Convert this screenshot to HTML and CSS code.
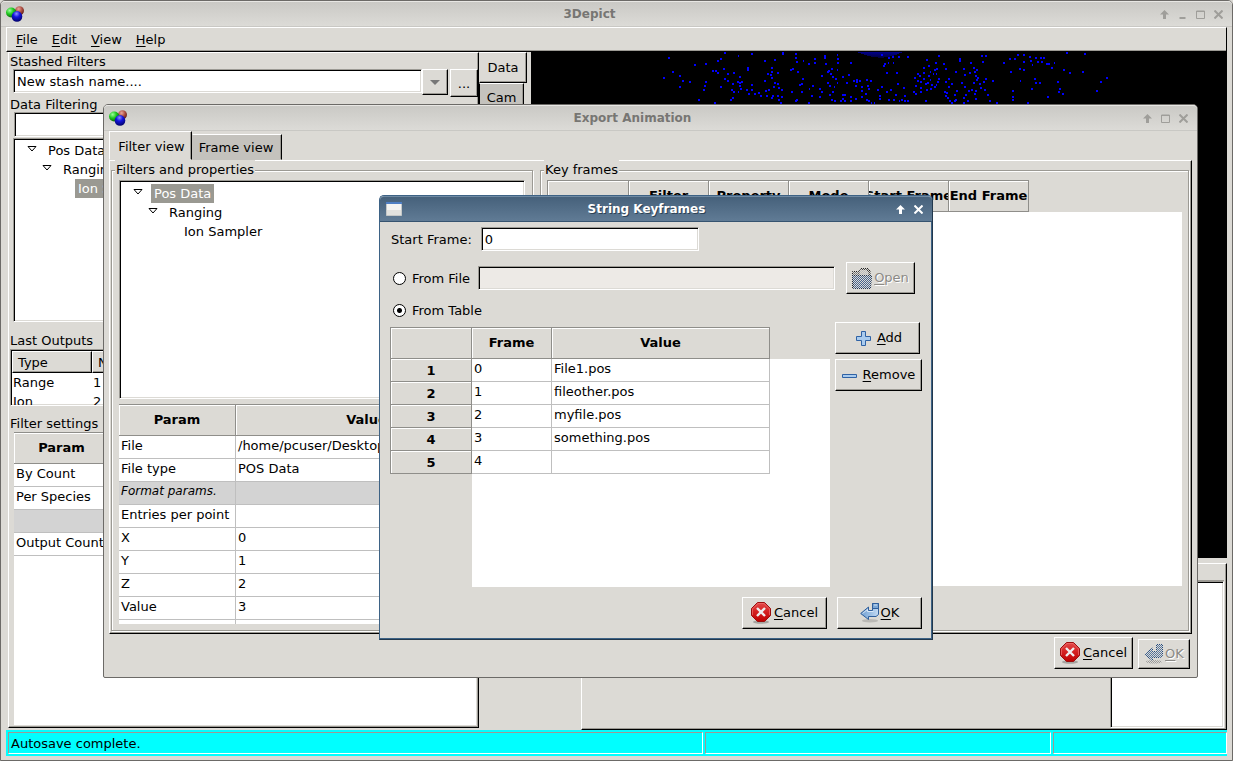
FILE: index.html
```html
<!DOCTYPE html>
<html lang="en">
<head>
<meta charset="utf-8">
<title>3Depict</title>
<link rel="stylesheet" href="styles.css">
</head>
<body>
<svg class="defs" width="0" height="0" aria-hidden="true">
  <defs>
    <radialGradient id="g-green" cx=".35" cy=".3" r=".8"><stop offset="0" stop-color="#9dff9d"/><stop offset=".45" stop-color="#1fc81f"/><stop offset="1" stop-color="#064b06"/></radialGradient>
    <radialGradient id="g-red" cx=".4" cy=".3" r=".8"><stop offset="0" stop-color="#eaa79c"/><stop offset=".5" stop-color="#a8493c"/><stop offset="1" stop-color="#4a120c"/></radialGradient>
    <radialGradient id="g-blue" cx=".45" cy=".25" r=".8"><stop offset="0" stop-color="#8f8fff"/><stop offset=".4" stop-color="#1414dd"/><stop offset="1" stop-color="#00005c"/></radialGradient>
    <linearGradient id="g-stop" x1="0" y1="0" x2="0" y2="1"><stop offset="0" stop-color="#e24a4a"/><stop offset=".5" stop-color="#d42020"/><stop offset="1" stop-color="#bd0000"/></linearGradient>
    <linearGradient id="g-arrow" x1="0" y1="0" x2="1" y2="0"><stop offset="0" stop-color="#6f9fd3"/><stop offset="1" stop-color="#c3daf2"/></linearGradient>
    <pattern id="stipple" width="2" height="2" patternUnits="userSpaceOnUse"><path shape-rendering="crispEdges" fill="#dcdad5" d="M0 0h1v1h-1zM1 1h1v1h-1z"/></pattern>
    <symbol id="i-app" viewBox="0 0 18 16">
      <circle cx="13.500" cy="4.800" r="4.500" fill="url(#g-red)"/>
      <ellipse cx="5.200" cy="6.500" rx="5.200" ry="5" fill="url(#g-green)"/>
      <circle cx="11" cy="10.400" r="5.300" fill="url(#g-blue)"/>
    </symbol>
    <symbol id="i-up" viewBox="0 0 9 9"><path fill="currentColor" d="M4.500 0 9 4.500H6V9H3V4.500H0z"/></symbol>
    <symbol id="i-min" viewBox="0 0 9 9"><path fill="currentColor" d="M1.500 7h6v2h-6z"/></symbol>
    <symbol id="i-max" viewBox="0 0 9 9"><path fill="none" stroke="currentColor" d="M.5 1h8v7.500h-8zM.5 1.500h8"/></symbol>
    <symbol id="i-close" viewBox="0 0 9 9"><path fill="none" stroke="currentColor" stroke-width="2" d="M.5.5l8 8m0-8l-8 8"/></symbol>
    <symbol id="i-cancel" viewBox="0 0 20 22">
      <ellipse cx="10" cy="20" rx="8" ry="1.800" fill="#000" opacity=".25"/>
      <path fill="url(#g-stop)" stroke="#9b0e0e" d="M6.500.5h7l6 6v7l-6 6h-7l-6-6v-7z"/>
      <path fill="none" stroke="#f07070" opacity=".7" d="M7 1.500h6l5.500 5.500v6M1.500 13V7L7 1.500"/>
      <path fill="none" stroke="#eee" stroke-width="2.400" d="M6 6l8 8m0-8l-8 8"/>
    </symbol>
    <symbol id="i-ok" viewBox="0 0 20 20">
      <ellipse cx="10" cy="17.800" rx="8" ry="1.700" fill="#000" opacity=".15"/>
      <path fill="url(#g-arrow)" stroke="#2f5f9c" stroke-linejoin="round" d="M12.500.5h6v11l-2.500 2H8.500v3L.7 10.500 8.500 4v3.500h4z"/>
      <path fill="#7ba7d6" stroke="#2f5f9c" d="M12.500.5h6v5h-6z"/>
      <path fill="none" stroke="#eaf3fc" opacity=".8" d="M14 2h3M2.500 10.500l5-4v2h6"/>
    </symbol>
    <symbol id="i-ok-off" viewBox="0 0 20 20">
      <ellipse cx="10" cy="17.800" rx="8" ry="1.700" fill="#999"/>
      <path fill="#58779f" stroke="#234a7d" d="M12.500.5h6v11l-2.500 2H8.500v3L.7 10.500 8.500 4v3.500h4z"/>
      <rect width="20" height="20" fill="url(#stipple)"/>
    </symbol>
    <symbol id="i-open-off" viewBox="0 0 20 21">
      <path fill="#777" stroke="#222" d="M.5 20V3.500h6l2-3h8l1.500 3V8"/>
      <path fill="#bbb" stroke="#444" d="M7 8V3.500l2-2h5.500L17 4v4"/>
      <path fill="#47648f" stroke="#1f3454" d="M.5 7.500h19l-1 13H1.500z"/>
      <rect width="20" height="21" fill="url(#stipple)"/>
    </symbol>
  </defs>
</svg>

<div class="window main">
  <header class="titlebar">
    <svg class="app-icon"><use href="#i-app"/></svg>
    <h1 class="title">3Depict</h1>
    <div class="window-buttons">
      <button aria-label="Shade"><svg><use href="#i-up"/></svg></button>
      <button aria-label="Minimize"><svg><use href="#i-min"/></svg></button>
      <button aria-label="Maximize"><svg><use href="#i-max"/></svg></button>
      <button aria-label="Close"><svg><use href="#i-close"/></svg></button>
    </div>
  </header>
  <nav class="menubar">
    <button><u>F</u>ile</button><button><u>E</u>dit</button><button><u>V</u>iew</button><button><u>H</u>elp</button>
  </nav>

  <div class="workspace">
    <section class="notebook">
      <div class="side-page">
        <label class="caption" for="stash">Stashed Filters</label>
        <div class="combo-row">
          <div class="combo">
            <input id="stash" class="field" value="New stash name....">
            <button class="bevel drop" aria-label="Show stashes"><svg viewBox="0 0 10 5"><path fill="#777" d="M0 0h10L5 5z"/></svg></button>
          </div>
          <button class="bevel more">...</button>
        </div>
        <label class="caption" for="filter">Data Filtering</label>
        <input id="filter" class="field filter-choice">
        <ul class="tree sunken side-tree">
          <li><svg class="twist" viewBox="0 0 10 6"><path d="M1 .5h8L5 5z"/></svg><span>Pos Data</span></li>
          <li class="level2"><svg class="twist" viewBox="0 0 10 6"><path d="M1 .5h8L5 5z"/></svg><span>Ranging</span></li>
          <li class="level3"><span class="selected">Ion Sampler</span></li>
        </ul>
        <h2 class="caption outputs-caption">Last Outputs</h2>
        <div class="sunken outputs">
          <table class="list">
            <thead><tr><th class="list-type">Type</th><th>Num</th></tr></thead>
            <tbody><tr><td>Range</td><td>1</td></tr><tr><td>Ion</td><td>2</td></tr></tbody>
          </table>
        </div>
        <h2 class="caption settings-caption">Filter settings</h2>
        <div class="grid-area side-grid">
          <table class="grid">
            <thead><tr><th class="side-param">Param</th><th></th></tr></thead>
            <tbody>
              <tr><td>By Count</td><td></td></tr>
              <tr><td>Per Species</td><td></td></tr>
              <tr class="group"><td></td><td></td></tr>
              <tr><td>Output Count</td><td></td></tr>
            </tbody>
          </table>
        </div>
      </div>
      <div class="side-tabs">
        <button class="side-tab active">Data</button>
        <button class="side-tab">Cam</button>
      </div>
    </section>

    <section class="views">
      <div class="scene">
        <svg class="cloud" viewBox="0 0 695 54" shape-rendering="crispEdges">
          <defs><linearGradient id="g-cap" x1="0" y1="0" x2="0" y2="1"><stop offset="0" stop-color="#00008c"/><stop offset="1" stop-color="#00003a"/></linearGradient></defs>
          <path fill="url(#g-cap)" d="M325 0h47l-10 4-12 2-13-2z"/>
          <g transform="translate(109 -12) scale(.378 .3333)" fill="none" stroke="#00f" stroke-width="6">
            <path d="M74 54h5M61 114h5M85 96h5M103 108h5M111 123h5M103 141h5M130 126h5M143 75h5M172 72h5M153 180h5M167 150h5M169 138h5M172 126h5M196 190h5M190 93h5M198 93h5M204 63h5M212 57h5M222 39h5M204 99h5M220 87h5M230 102h5M223 117h5M230 123h5M212 141h5M238 180h5M244 174h5M246 99h5M258 48h5M283 84h5M283 90h5M294 42h5M262 111h5M256 126h5M262 129h5M268 126h5M244 132h5M262 138h5M241 150h5M246 156h5M258 156h5M265 147h5M281 150h5M294 150h5M286 162h5M302 162h5M294 135h5M312 159h5M318 168h5M328 63h5M354 60h5M375 42h5M375 39h5M346 84h5M346 96h5M336 102h5M344 105h5M346 114h5M328 123h5M362 99h5M354 129h5M362 132h5M352 141h5M366 144h5M330 153h5M338 150h5M372 151h5M333 168h5M346 174h5M349 168h5M362 168h5M372 171h5M365 180h5M370 190h5M410 42h5M410 54h5M412 66h5M398 90h5M402 87h5M400 156h5M415 96h5M430 63h5M444 72h5M428 117h5M420 135h5M425 132h5M425 156h5M412 180h5M410 183h5M444 190h5M446 147h5M452 168h5M456 138h5M460 57h5M460 69h5M478 108h5M474 147h5M478 156h5M474 171h5M488 48h5M488 54h5M490 72h5M494 96h5M498 93h5M506 87h5M502 102h5M520 90h5M508 111h5M516 117h5M520 129h5M494 129h5M500 138h5M512 141h5M508 156h5M500 165h5M506 180h5M514 183h5M520 45h5M522 57h5M522 69h5M535 111h5M535 165h5M540 165h5M535 177h5M530 183h5M540 183h5M556 69h5M550 105h5M546 129h5M564 123h5M571 120h5M571 126h5M580 123h5M570 138h5M556 171h5M556 183h5M568 177h5M584 141h5M584 153h5M598 120h5M609 123h5M600 138h5M604 147h5M596 162h5M584 171h5M598 180h5M604 183h5M610 190h5M618 188h5M628 150h5M638 141h5M632 168h5M632 177h5M650 99h5M644 78h5M646 72h5M655 69h5M668 69h5M656 54h5M666 51h5M682 51h5M706 51h5M678 99h5M638 45h5M650 156h5M662 150h5M656 180h5M674 165h5M670 180h5M684 183h5M690 180h5M698 183h5M706 183h5M680 132h5M696 144h5M698 168h5M722 156h5M725 114h5M732 102h5M738 108h5M732 123h5M740 126h5M728 138h5M740 144h5M728 162h5M740 156h5M748 84h5M748 99h5M748 117h5M754 132h5M756 60h5M762 78h5M766 96h5M762 108h5M766 120h5M760 129h5M770 135h5M768 147h5M756 150h5M754 183h5M780 69h5M778 90h5M784 87h5M774 102h5M782 102h5M788 117h5M786 126h5M782 135h5M778 141h5M788 48h5M802 72h5M806 87h5M816 117h5M806 126h5M816 141h5M804 156h5M810 159h5M806 168h5M812 174h5M818 183h5M822 188h5M830 183h5M834 180h5M830 165h5M836 153h5M822 132h5M834 96h5M844 57h5M844 63h5M854 87h5M858 105h5M850 129h5M858 141h5M868 153h5M860 165h5M854 174h5M866 183h5M854 190h5M870 99h5M874 69h5M882 84h5M888 90h5M884 96h5M886 108h5M892 114h5M888 120h5M880 129h5M896 132h5M876 150h5M886 153h5M884 162h5M886 177h5M902 48h5M912 48h5M906 66h5M912 117h5M908 126h5M900 144h5M910 150h5M924 183h5M918 165h5M932 123h5M942 188h5M960 69h5M976 57h5M990 57h5M998 45h5M980 96h5M1002 87h5M1014 66h5M1014 45h5M1014 90h5M1004 123h5M984 153h5M984 171h5M984 180h5M1024 188h5M1030 51h5M1032 63h5M1036 75h5M1046 54h5M1050 66h5M1058 54h5M1066 54h5M1062 66h5M1074 72h5M1080 72h5M1088 84h5M1094 69h5M1042 117h5M1046 129h5M1056 129h5M1034 147h5M1078 171h5M1104 126h5M1108 147h5M1106 156h5M1116 162h5M1126 39h5M1120 90h5M1136 99h5M1169 96h5M1174 42h5M1206 153h5M1216 126h5M1232 114h5"/>
          </g>
        </svg>
      </div>
      <div class="plots"><div class="plot-page"></div><div class="plot-list"><div class="plot-list-head"></div><div class="sunken plot-list-body"></div></div></div>
    </section>
  </div>

  <footer class="statusbar"><span class="status first">Autosave complete.</span><span class="status"></span><span class="status last"></span></footer>
</div>

<div class="window export" role="dialog" aria-label="Export Animation">
  <header class="titlebar">
    <svg class="app-icon"><use href="#i-app"/></svg>
    <h1 class="title">Export Animation</h1>
    <div class="window-buttons">
      <button aria-label="Shade"><svg><use href="#i-up"/></svg></button>
      <button aria-label="Maximize"><svg><use href="#i-max"/></svg></button>
      <button aria-label="Close"><svg><use href="#i-close"/></svg></button>
    </div>
  </header>
  <div class="tabs"><button class="tab active">Filter view</button><button class="tab">Frame view</button></div>
  <div class="export-page">
    <fieldset class="frame filters-frame">
      <legend>Filters and properties</legend>
      <ul class="tree sunken export-tree">
        <li><svg class="twist" viewBox="0 0 10 6"><path d="M1 .5h8L5 5z"/></svg><span class="selected">Pos Data</span></li>
        <li class="level2"><svg class="twist" viewBox="0 0 10 6"><path d="M1 .5h8L5 5z"/></svg><span>Ranging</span></li>
        <li class="level3"><span>Ion Sampler</span></li>
      </ul>
      <div class="grid-area params">
        <table class="grid">
          <thead><tr><th class="param-name">Param</th><th class="param-value">Value</th></tr></thead>
          <tbody>
            <tr><td>File</td><td>/home/pcuser/Desktop</td></tr>
            <tr><td>File type</td><td>POS Data</td></tr>
            <tr class="group"><td><i>Format params.</i></td><td></td></tr>
            <tr><td>Entries per point</td><td></td></tr>
            <tr><td>X</td><td>0</td></tr>
            <tr><td>Y</td><td>1</td></tr>
            <tr><td>Z</td><td>2</td></tr>
            <tr><td>Value</td><td>3</td></tr>
            <tr><td></td><td></td></tr>
          </tbody>
        </table>
      </div>
    </fieldset>
    <fieldset class="frame keys-frame">
      <legend>Key frames</legend>
      <div class="grid-area keys">
        <table class="grid keys-table">
          <thead><tr><th></th><th>Filter</th><th>Property</th><th>Mode</th><th><span class="clip">Start Frame</span></th><th>End Frame</th></tr></thead>
        </table>
      </div>
    </fieldset>
  </div>
  <div class="export-actions">
    <button class="bevel action"><svg class="icon-cancel"><use href="#i-cancel"/></svg><span><u>C</u>ancel</span></button>
    <button class="bevel action ok-off" disabled><svg class="icon-ok"><use href="#i-ok-off"/></svg><span><u>O</u>K</span></button>
  </div>
</div>

<div class="window keyframes" role="dialog" aria-label="String Keyframes">
  <header class="titlebar">
    <svg class="doc-icon" viewBox="0 0 16 14"><path fill="#f4f4f2" stroke="#c5c8c8" d="M.5.5h15v13H.5z"/><path fill="#e2e2df" d="M1 8h14v5H1z"/><path fill="#4f7fc4" d="M0 0h16v2H0z"/></svg>
    <h1 class="title">String Keyframes</h1>
    <div class="window-buttons">
      <button aria-label="Shade"><svg><use href="#i-up"/></svg></button>
      <button aria-label="Close"><svg><use href="#i-close"/></svg></button>
    </div>
  </header>
  <form class="key-form">
    <div class="form-row start-row"><label for="start">Start Frame:</label><input id="start" class="field start-input" value="0"></div>
    <div class="form-row file-row">
      <label class="radio"><input type="radio" name="source">From File</label>
      <input class="field file-input" aria-label="File name" disabled>
      <button type="button" class="bevel action open" disabled><svg class="icon-open"><use href="#i-open-off"/></svg><span><u>O</u>pen</span></button>
    </div>
    <div class="form-row table-row"><label class="radio"><input type="radio" name="source" checked>From Table</label></div>
    <div class="table-area">
      <div class="grid-area values">
        <table class="grid values-table">
          <thead><tr><th class="row-head"></th><th class="col-frame">Frame</th><th class="col-value">Value</th></tr></thead>
          <tbody>
            <tr><th>1</th><td>0</td><td>File1.pos</td></tr>
            <tr><th>2</th><td>1</td><td>fileother.pos</td></tr>
            <tr><th>3</th><td>2</td><td>myfile.pos</td></tr>
            <tr><th>4</th><td>3</td><td>something.pos</td></tr>
            <tr><th>5</th><td>4</td><td></td></tr>
          </tbody>
        </table>
      </div>
      <div class="table-buttons">
        <button type="button" class="bevel action add"><svg class="icon-sign" viewBox="0 0 15 15"><path fill="#a9cbee" stroke="#2f62a5" d="M5.500.5h4V5.500h5v4h-5v5h-4V9.500h-5v-4h5z"/></svg><span><u>A</u>dd</span></button>
        <button type="button" class="bevel action remove"><svg class="icon-sign" viewBox="0 0 15 15"><path fill="#a9cbee" stroke="#2f62a5" d="M.5 6.500h14v3H.5z"/></svg><span><u>R</u>emove</span></button>
      </div>
    </div>
    <div class="key-actions">
      <button type="button" class="bevel action wide"><svg class="icon-cancel"><use href="#i-cancel"/></svg><span><u>C</u>ancel</span></button>
      <button type="button" class="bevel action wide"><svg class="icon-ok"><use href="#i-ok"/></svg><span><u>O</u>K</span></button>
    </div>
  </form>
</div>
</body>
</html>
```
FILE: styles.css
```css
* { box-sizing: border-box; }
body {
  margin: 0;
  height: 100vh;
  overflow: hidden;
  position: relative;
  background: #dcdad5;
  color: #000;
  font: 13px/19px "DejaVu Sans", sans-serif;
}
h1, h2, ul, fieldset { margin: 0; padding: 0; border: 0; font: inherit; }
ul { list-style: none; }
button, input { font: inherit; color: inherit; margin: 0; border-radius: 0; }
button { background: none; border: 0; padding: 0; white-space: nowrap; }
u { text-underline-offset: 2px; }
.defs { position: absolute; }

/* windows */
.window { display: flex; flex-direction: column; background: #dcdad5; border: 1px solid #6c6a67; }
.main { height: 100%; padding: 0 5px 4px; border-radius: 5px 5px 0 0; }
.export { position: absolute; left: 103px; right: 35px; top: 104px; bottom: 83px; padding: 0 5px 8px; border-radius: 5px 5px 2px 2px; }
.keyframes { position: absolute; left: 379px; top: 195px; width: 554px; height: 445px; border-color: #3d6285 #22384d #22384d #3d6285; box-shadow: inset -1px -1px #3d6285; border-radius: 5px 5px 0 0; }

.titlebar {
  display: flex;
  align-items: center;
  flex: none;
  height: 26px;
  padding: 0 4px 0 5px;
  margin: 0 -5px;
  border-radius: 4px 4px 0 0;
  border-top: 1px solid #e8e7e4;
  border-bottom: 1px solid #c9c8c4;
  background: linear-gradient(#cac9c5, #dcdbd7);
  color: #777673;
}
.main .titlebar { padding-right: 9px; }
.title { flex: 1; padding-right: 5px; text-align: center; font-size: 12px; font-weight: bold; }
.app-icon { width: 18px; height: 16px; }
.window-buttons { display: flex; gap: 9px; color: #9f9e9a; }
.window-buttons button { display: flex; }
.window-buttons svg { width: 9px; height: 9px; }
.export .window-buttons { padding-right: 5px; }
.keyframes .titlebar {
  margin: 0;
  padding: 0 9px 0 6px;
  background: linear-gradient(#46617b, #607b95);
  border-color: #6f8aa3 #46617b #36536f;
  color: #fff;
  text-shadow: 1px 1px #2d4256;
}
.keyframes .window-buttons { color: #fff; }
.doc-icon { width: 16px; height: 14px; }

/* shared controls */
.bevel { border: 1px solid; border-color: #fff #000 #000 #fff; box-shadow: inset -1px -1px #9c9a94; background: #dcdad5; }
.field, .sunken { border: 1px solid; border-color: #9c9a94 #fff #fff #9c9a94; box-shadow: inset 1px 1px #000, inset -1px -1px #dcdad5; background: #fff; }
.field { height: 24px; padding: 0 3px; min-width: 0; outline: 0; }
.field:disabled { background: #edeae6; }
.action { display: flex; align-items: center; justify-content: center; gap: 3px; height: 32px; flex: none; }
.action span { padding-bottom: 2px; }
.action:disabled { color: #8c8a86; text-shadow: 1px 1px #fff; }
.icon-cancel { width: 20px; height: 22px; }
.icon-ok { width: 20px; height: 20px; }
.icon-open { width: 20px; height: 21px; }
.icon-sign { width: 15px; height: 15px; }

.tree li { display: flex; align-items: center; height: 19px; padding-left: 13px; gap: 8px; }
.tree .level2 { padding-left: 28px; }
.tree .level3 { padding-left: 61px; }
.tree span { padding: 0 3px; }
.tree .selected { background: #9a9992; color: #fff; }
.twist { width: 10px; height: 6px; margin-bottom: 4px; fill: none; stroke: #000; }

.grid-area { overflow: hidden; background: #fff; }
.grid { border-collapse: separate; border-spacing: 0; table-layout: fixed; background: #dcdad5; }
.grid th { height: 23px; padding: 0; background: #dcdad5; border: solid #8f8e8a; border-width: 0 1px 1px 0; box-shadow: inset 1px 1px #fff; text-align: center; overflow: hidden; white-space: nowrap; }
.grid thead th { height: 32px; border-top-width: 1px; padding-bottom: 2px; }
.grid td { height: 23px; padding: 0 2px; background: #fff; border: solid #bfbfbf; border-width: 0 1px 1px 0; line-height: 20px; vertical-align: top; white-space: nowrap; overflow: hidden; }
.grid .group td { background: #d3d3d3; font-size: 12px; line-height: 18px; }

/* main window */
.menubar { display: flex; flex: none; gap: 14px; height: 25px; padding: 0 9px; border: 1px solid; border-color: #fff #000 #000 #fff; box-shadow: inset 0 -1px #9c9a94; }
.workspace { flex: 1; min-height: 0; display: grid; grid-template-columns: minmax(0, 525px) minmax(0, 1fr); }
.notebook { display: flex; padding: 0 4px 2px 2px; }
.side-page { flex: 1; display: flex; flex-direction: column; min-width: 0; padding-left: 1px; border: 1px solid; border-color: #fff #000 #000 #fff; box-shadow: inset -1px -1px #9c9a94; }
.caption { display: block; line-height: 17px; }
.combo-row { display: flex; gap: 2px; padding-left: 3px; height: 26px; margin-bottom: 1px; margin-top: -1px; align-items: flex-start; }
.combo { display: flex; flex: 1; }
.combo .field { flex: 1; }
.drop { width: 26px; height: 26px; display: flex; align-items: center; justify-content: center; }
.drop svg { width: 10px; height: 5px; }
.more { width: 28px; height: 28px; }
.filter-choice { margin-left: 4px; height: 25px; margin-top: -1px; }
.side-tree { height: 184px; margin: 1px 2px 0 3px; padding-top: 2px; }
.outputs-caption { margin-top: 10px; }
.outputs { height: 57px; overflow: hidden; padding: 1px; margin-right: 3px; }
.list { width: 100%; table-layout: fixed; border-collapse: separate; border-spacing: 0; }
.list th { height: 22px; padding: 0 5px; text-align: left; font-weight: normal; background: #dcdad5; border: 1px solid; border-color: #fff #000 #000 #fff; box-shadow: inset -1px -1px #9c9a94; }
.list-type { width: 80px; }
.list td { padding: 0 1px; height: 19px; line-height: 18px; }
.settings-caption { margin-top: 9px; }
.side-grid { flex: 1; margin: 0 2px 2px 4px; }
.side-grid .grid { width: 100%; }
.side-param { width: 96px; }
.side-tabs { width: 48px; }
.side-tab { display: block; height: 31px; width: 48px; border: 1px solid; border-color: #fff #000 #000 #dcdad5; box-shadow: inset -1px -1px #9c9a94; }
.side-tab + .side-tab { width: 45px; height: 28px; background: #c4c2bd; border-left-color: #000; }

.views { display: flex; flex-direction: column; min-width: 0; }
.scene { flex: 1; background: #000; overflow: hidden; }
.cloud { display: block; width: 695px; height: 54px; }
.plots { height: 167px; margin: 5px 0 0 50px; display: flex; border: 1px solid; border-color: #fff #000 #000 #fff; box-shadow: inset -1px -1px #9c9a94; }
.plot-page { flex: 1; }
.plot-list { width: 116px; display: flex; flex-direction: column; padding: 0 2px 1px 0; }
.plot-list-head { height: 17px; border-bottom: 1px solid #9c9a94; }
.plot-list-body { flex: 1; }

.statusbar { flex: none; height: 26px; display: grid; grid-template-columns: 695fr 346fr 174fr; gap: 2px; padding: 2px 0 2px 2px; background: #0ff; }
.status { border: 1px solid; border-color: #9c9a94 #fff #fff #9c9a94; padding: 1px 2px 0; line-height: 19px; }

/* export animation */
.tabs { flex: none; display: flex; align-items: flex-end; height: 29px; }
.tab { height: 26px; width: 90px; padding-right: 2px; background: #c4c2bd; border: 1px solid; border-color: #fff #000 #c4c2bd #c4c2bd; box-shadow: inset -1px 0 #9c9a94; }
.tab.active { height: 29px; width: 83px; padding: 2px 0 0 2px; background: #dcdad5; border-color: #fff #000 #dcdad5 #fff; }
.export-page { flex: 1; min-height: 0; display: grid; grid-template: minmax(0, 1fr) / 422px minmax(0, 1fr); gap: 7px; padding: 0 2px 2px 1px; border: 1px solid; border-color: #fff #000 #000 #fff; box-shadow: inset -1px -1px #9c9a94; }
.frame { min-width: 0; min-height: 0; display: flex; flex-direction: column; position: relative; border: 1px solid #9c9a94; box-shadow: inset 1px 1px #fff, 1px 1px #fff; margin-top: 9px; padding: 9px 7px 6px; }
.frame legend { position: absolute; top: -11px; left: 3px; padding: 0 1px; background: #dcdad5; }
.export-tree { height: 219px; flex: none; padding-top: 3px; }
.params { flex: 1; min-height: 0; margin-top: 5px; }
.params .grid { width: 379px; }
.param-name { width: 117px; }
.keys { flex: 1; margin-bottom: 38px; }
.keys-frame { padding-right: 6px; padding-left: 6px; }
.keys-table { width: 100%; }
.keys-table th { width: 80px; }
.keys-table thead tr::after { content: ""; display: table-cell; background: #dcdad5; }
.keys-table th:first-child { width: 82px; border-left-width: 1px; }
.clip { display: flex; justify-content: center; }
.export-actions { flex: none; display: flex; justify-content: flex-end; align-items: flex-end; gap: 5px; padding: 3px 2px 0; }
.export-actions .action { width: 79px; }
.export-actions .ok-off { width: 52px; height: 30px; gap: 1px; }

/* string keyframes */
.key-form { flex: 1; display: flex; flex-direction: column; padding: 5px 10px 10px; }
.form-row { display: flex; align-items: center; flex: none; }
.start-row { gap: 9px; padding-left: 1px; }
.start-input { width: 218px; }
.file-row { margin-top: 11px; gap: 8px; }
.file-input { flex: 1; }
.open { width: 69px; margin: 0 7px 0 3px; gap: 2px; }
.table-row { height: 33px; }
.radio { display: flex; align-items: center; gap: 6px; padding-left: 3px; }
.radio input { appearance: none; width: 13px; height: 13px; border: 1px solid #000; border-radius: 50%; background: #fff; }
.radio input:checked { background: radial-gradient(circle, #000 0 2px, #fff 3px); }
.table-area { flex: 1; display: flex; min-height: 0; gap: 5px; }
.values { flex: 1; background: linear-gradient(#fff, #fff) 82px 32px no-repeat, #dcdad5; }
.values-table { width: 380px; }
.values-table th:first-child { border-left-width: 1px; }
.row-head { width: 82px; }
.col-frame { width: 80px; }
.table-buttons { width: 87px; display: flex; flex-direction: column; gap: 5px; margin-top: -5px; }
.add { width: 85px; gap: 6px; padding-left: 3px; }
.remove { width: 87px; gap: 6px; }
.key-actions { display: flex; justify-content: flex-end; gap: 10px; padding-top: 10px; }
.wide { width: 85px; }
.key-actions .wide:last-child { gap: 1px; }
```
